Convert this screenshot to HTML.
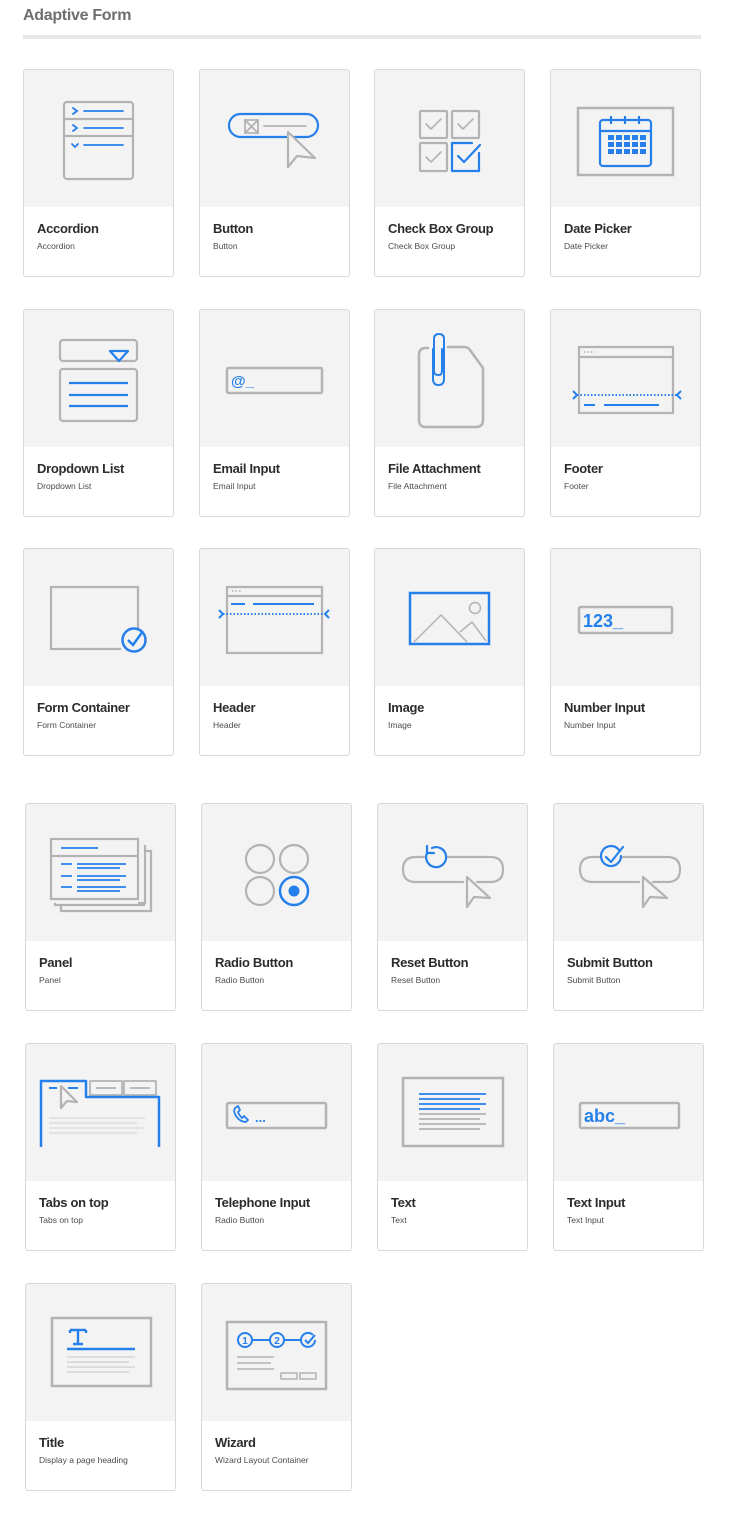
<!DOCTYPE html>
<html><head><meta charset="utf-8"><style>
body{margin:0;background:#fff;width:750px;height:1527px;position:relative;font-family:"Liberation Sans",sans-serif;overflow:hidden}
h1{position:absolute;left:23px;top:7px;margin:0;font-size:16px;font-weight:bold;color:#6e6e6e;letter-spacing:-0.3px}
.hr{position:absolute;left:23px;top:35px;width:678px;height:4px;background:#e8e8e8}
.c{position:absolute;width:149px;height:206px;border:1px solid #d8d8d8;border-radius:3px;background:#fff;overflow:hidden}
.c svg{position:absolute;left:0;top:0;width:149px;height:137px;background:#f3f3f3}
.t{position:absolute;left:13px;top:151px;font-size:13px;font-weight:bold;color:#2c2c2c;letter-spacing:-0.3px;white-space:nowrap}
.s{position:absolute;left:13px;top:171px;font-size:8.5px;color:#4b4b4b;white-space:nowrap}
</style></head><body>
<h1>Adaptive Form</h1><div class="hr"></div>

<!-- Row 1 -->
<div class="c" style="left:23px;top:69px"><svg viewBox="1 1 149 137" fill="none" stroke-width="2.2" stroke-linecap="round">
<rect x="41" y="33" width="69" height="77" rx="3" stroke="#b3b3b3"/><path d="M41 50H110M41 67H110" stroke="#b3b3b3"/>
<path d="M61 42H100M61 59H100M61 76H100M50 39l4 3-4 3M50 56l4 3-4 3M49 75l3 3 3-3" stroke="#2680eb" stroke-width="1.8"/></svg>
<div class="t">Accordion</div><div class="s">Accordion</div></div>

<div class="c" style="left:199px;top:69px"><svg viewBox="1 1 149 137" fill="none" stroke-width="2.2" stroke-linecap="round" stroke-linejoin="round">
<rect x="30" y="45" width="89" height="23" rx="11.5" stroke="#2680eb"/>
<rect x="46" y="51" width="13" height="13" stroke="#b3b3b3" stroke-width="1.8"/><path d="M46 51l13 13M59 51L46 64M65 57H107" stroke="#b3b3b3" stroke-width="1.8"/>
<path d="M89 63V98L98 87L116 89Z" fill="#f3f3f3" stroke="#b3b3b3"/></svg>
<div class="t">Button</div><div class="s">Button</div></div>

<div class="c" style="left:374px;top:69px"><svg viewBox="1 1 149 137" fill="none" stroke-width="2.2" stroke-linecap="round" stroke-linejoin="round">
<rect x="46" y="42" width="27" height="27" rx="1" stroke="#b3b3b3"/><rect x="78" y="42" width="27" height="27" rx="1" stroke="#b3b3b3"/><rect x="46" y="74" width="27" height="28" rx="1" stroke="#b3b3b3"/>
<path d="M52 55l5 5 10-10M84 55l5 5 10-10M52 88l5 5 10-10" stroke="#b3b3b3" stroke-width="1.6"/>
<path d="M98 74H78V102H105V84" stroke="#2680eb"/><path d="M84 87l6 6 16-17" stroke="#2680eb"/></svg>
<div class="t">Check Box Group</div><div class="s">Check Box Group</div></div>

<div class="c" style="left:550px;top:69px"><svg viewBox="1 1 149 137" fill="none" stroke-width="2.2">
<rect x="28" y="39" width="95" height="67" stroke="#b3b3b3" stroke-width="2.5"/>
<rect x="50" y="51" width="51" height="46" rx="3" stroke="#2680eb"/><path d="M50 62H101M61 47V55M75 47V55M89 47V55" stroke="#2680eb"/>
<g fill="#2680eb"><rect x="58" y="66" width="6" height="5"/><rect x="66" y="66" width="6" height="5"/><rect x="74" y="66" width="6" height="5"/><rect x="82" y="66" width="6" height="5"/><rect x="90" y="66" width="6" height="5"/>
<rect x="58" y="73" width="6" height="5"/><rect x="66" y="73" width="6" height="5"/><rect x="74" y="73" width="6" height="5"/><rect x="82" y="73" width="6" height="5"/><rect x="90" y="73" width="6" height="5"/>
<rect x="58" y="80" width="6" height="5"/><rect x="66" y="80" width="6" height="5"/><rect x="74" y="80" width="6" height="5"/><rect x="82" y="80" width="6" height="5"/><rect x="90" y="80" width="6" height="5"/></g></svg>
<div class="t">Date Picker</div><div class="s">Date Picker</div></div>

<!-- Row 2 -->
<div class="c" style="left:23px;top:309px"><svg viewBox="1 1 149 137" fill="none" stroke-width="2.2" stroke-linejoin="round">
<rect x="37" y="31" width="77" height="21" rx="3" stroke="#b3b3b3"/><rect x="37" y="60" width="77" height="52" rx="3" stroke="#b3b3b3"/>
<path d="M87 42H105L96 52Z" fill="#f3f3f3" stroke="#2680eb"/><path d="M46 74H105M46 86H105M46 97H105" stroke="#2680eb"/></svg>
<div class="t">Dropdown List</div><div class="s">Dropdown List</div></div>

<div class="c" style="left:199px;top:309px"><svg viewBox="1 1 149 137" fill="none">
<rect x="28" y="59" width="95" height="25" rx="1.5" stroke="#b3b3b3" stroke-width="2.5"/>
<text x="32" y="77" font-family="Liberation Sans" font-size="15" font-weight="bold" fill="#2680eb">@_</text></svg>
<div class="t">Email Input</div><div class="s">Email Input</div></div>

<div class="c" style="left:374px;top:309px"><svg viewBox="1 1 149 137" fill="none" stroke-width="2.5" stroke-linecap="round">
<path d="M54 39H52Q45 39 45 46V111Q45 118 52 118H102Q109 118 109 111V59L96 41Q94 38 90 38H74" stroke="#b3b3b3"/>
<path d="M59 40V70Q59 76 64.5 76Q70 76 70 70V30Q70 25 65 25Q60 25 60 30V62Q60 66 64.5 66Q68 66 68 62V40" stroke="#2680eb" stroke-width="2"/></svg>
<div class="t">File Attachment</div><div class="s">File Attachment</div></div>

<div class="c" style="left:550px;top:309px"><svg viewBox="1 1 149 137" fill="none" stroke-width="2.2">
<rect x="29" y="38" width="94" height="66" stroke="#b3b3b3"/><path d="M29 48H123" stroke="#b3b3b3"/>
<path d="M34 43h1.5M37.5 43h1.5M41 43h1.5" stroke="#b3b3b3" stroke-width="1.5"/>
<path d="M27 86H127" stroke="#2680eb" stroke-width="2" stroke-dasharray="1.5 2"/>
<path d="M23 82l4 4-4 4M131 82l-4 4 4 4M34 96H45M54 96H109" stroke="#2680eb" stroke-width="2"/></svg>
<div class="t">Footer</div><div class="s">Footer</div></div>

<!-- Row 3 -->
<div class="c" style="left:23px;top:548px"><svg viewBox="1 1 149 137" fill="none" stroke-width="2.2">
<path d="M98 101H28V39H115V80" stroke="#b3b3b3"/>
<circle cx="111" cy="92" r="11.5" stroke="#2680eb" stroke-width="2.5"/><path d="M105 92l5 5 10-14" stroke="#2680eb" stroke-width="2.5"/></svg>
<div class="t">Form Container</div><div class="s">Form Container</div></div>

<div class="c" style="left:199px;top:548px"><svg viewBox="1 1 149 137" fill="none" stroke-width="2.2">
<rect x="28" y="39" width="95" height="66" stroke="#b3b3b3"/><path d="M28 48H123" stroke="#b3b3b3"/>
<path d="M33 43h1.5M36.5 43h1.5M40 43h1.5" stroke="#b3b3b3" stroke-width="1.5"/>
<path d="M32 56H46M54 56H115" stroke="#2680eb" stroke-width="2"/>
<path d="M24 66H126" stroke="#2680eb" stroke-width="2" stroke-dasharray="1.5 2"/>
<path d="M20 62l4 4-4 4M130 62l-4 4 4 4" stroke="#2680eb" stroke-width="2"/></svg>
<div class="t">Header</div><div class="s">Header</div></div>

<div class="c" style="left:374px;top:548px"><svg viewBox="1 1 149 137" fill="none" stroke-width="2">
<rect x="36" y="45" width="79" height="51" stroke="#2680eb" stroke-width="2.5"/>
<circle cx="101" cy="60" r="5.5" stroke="#b3b3b3" stroke-width="1.5"/>
<path d="M40 94L67 67L93 94M86 84L98 74L112 93" stroke="#b3b3b3" stroke-width="1.5"/></svg>
<div class="t">Image</div><div class="s">Image</div></div>

<div class="c" style="left:550px;top:548px"><svg viewBox="1 1 149 137" fill="none">
<rect x="29" y="59" width="93" height="26" rx="1.5" stroke="#b3b3b3" stroke-width="2.5"/>
<text x="33" y="79" font-family="Liberation Sans" font-size="18" font-weight="bold" fill="#2680eb">123_</text></svg>
<div class="t">Number Input</div><div class="s">Number Input</div></div>

<!-- Row 4 -->
<div class="c" style="left:25px;top:803px"><svg viewBox="1 1 149 137" fill="none" stroke-width="2.2">
<path d="M113 100H120V42M30 100V102H120" stroke="#b3b3b3"/><path d="M120 48H126V108H36V102" stroke="#b3b3b3"/>
<rect x="26" y="36" width="87" height="60" fill="#f3f3f3" stroke="#b3b3b3"/><path d="M26 53H113" stroke="#b3b3b3"/>
<path d="M36 45H73M36 61H47M52 61H101M52 65H95M36 73H47M52 73H101M52 77H95M36 84H47M52 84H101M52 88H95" stroke="#2680eb" stroke-width="1.8"/></svg>
<div class="t">Panel</div><div class="s">Panel</div></div>

<div class="c" style="left:201px;top:803px"><svg viewBox="1 1 149 137" fill="none" stroke-width="2.2">
<circle cx="59" cy="56" r="14" stroke="#b3b3b3"/><circle cx="93" cy="56" r="14" stroke="#b3b3b3"/><circle cx="59" cy="88" r="14" stroke="#b3b3b3"/>
<circle cx="93" cy="88" r="14" stroke="#2680eb" stroke-width="2.5"/><circle cx="93" cy="88" r="5.5" fill="#2680eb"/></svg>
<div class="t">Radio Button</div><div class="s">Radio Button</div></div>

<div class="c" style="left:377px;top:803px"><svg viewBox="1 1 149 137" fill="none" stroke-width="2.2" stroke-linejoin="round" stroke-linecap="round">
<path d="M47 54H38.5Q26 54 26 66.5Q26 79 38.5 79H86M100 79H113.5Q126 79 126 66.5Q126 54 113.5 54H69" stroke="#b3b3b3"/>
<path d="M50 50A10 10 0 1 0 55 45" stroke="#2680eb"/><path d="M50 43V50H57" stroke="#2680eb"/>
<path d="M90 74V104L97 94L113 95Z" fill="#f3f3f3" stroke="#b3b3b3"/></svg>
<div class="t">Reset Button</div><div class="s">Reset Button</div></div>

<div class="c" style="left:553px;top:803px"><svg viewBox="1 1 149 137" fill="none" stroke-width="2.2" stroke-linejoin="round" stroke-linecap="round">
<path d="M47 54H39.5Q27 54 27 66.5Q27 79 39.5 79H86M100 79H114.5Q127 79 127 66.5Q127 54 114.5 54H69" stroke="#b3b3b3"/>
<path d="M66 47A10 10 0 1 0 68 53" stroke="#2680eb"/><path d="M53 54l5 5 12-15" stroke="#2680eb"/>
<path d="M90 74V104L97 94L114 95Z" fill="#f3f3f3" stroke="#b3b3b3"/></svg>
<div class="t">Submit Button</div><div class="s">Submit Button</div></div>

<!-- Row 5 -->
<div class="c" style="left:25px;top:1043px"><svg viewBox="1 1 149 137" fill="none" stroke-width="2.2" stroke-linejoin="round">
<rect x="65" y="38" width="32" height="14" stroke="#b3b3b3" stroke-width="1.8"/><rect x="99" y="38" width="32" height="14" stroke="#b3b3b3" stroke-width="1.8"/>
<path d="M71 45H91M105 45H125" stroke="#b3b3b3" stroke-width="1.8"/>
<path d="M16 104V38H61V54H134V104" stroke="#2680eb" stroke-width="2.5"/>
<path d="M24 45H32M43 45H53" stroke="#2680eb" stroke-width="2"/>
<path d="M36 43V65L42 58L52 59Z" fill="#f3f3f3" stroke="#b3b3b3"/>
<path d="M24 75H120M24 80H112M24 85H120M24 90H112" stroke="#dedede" stroke-width="1.5"/></svg>
<div class="t">Tabs on top</div><div class="s">Tabs on top</div></div>

<div class="c" style="left:201px;top:1043px"><svg viewBox="1 1 149 137" fill="none">
<rect x="26" y="60" width="99" height="25" rx="1.5" stroke="#b3b3b3" stroke-width="2.5"/>
<path d="M37 63L34 65Q32 68 35 73Q39 79 45 79L47 77L43 73L41 75Q38 72 37 69L39 67Z" stroke="#2680eb" stroke-width="1.8" stroke-linejoin="round"/>
<text x="54" y="79" font-family="Liberation Sans" font-size="13" font-weight="bold" fill="#2680eb">...</text></svg>
<div class="t">Telephone Input</div><div class="s">Radio Button</div></div>

<div class="c" style="left:377px;top:1043px"><svg viewBox="1 1 149 137" fill="none">
<rect x="26" y="35" width="100" height="68" stroke="#b3b3b3" stroke-width="2.5"/>
<path d="M42 51H109M42 56H103M42 61H109M42 66H103" stroke="#2680eb" stroke-width="1.8"/>
<path d="M42 71H109M42 76H103M42 81H109M42 86H103" stroke="#b3b3b3" stroke-width="1.8"/></svg>
<div class="t">Text</div><div class="s">Text</div></div>

<div class="c" style="left:553px;top:1043px"><svg viewBox="1 1 149 137" fill="none">
<rect x="27" y="60" width="99" height="25" rx="1.5" stroke="#b3b3b3" stroke-width="2.5"/>
<text x="31" y="79" font-family="Liberation Sans" font-size="18" font-weight="bold" fill="#2680eb">abc_</text></svg>
<div class="t">Text Input</div><div class="s">Text Input</div></div>

<!-- Row 6 -->
<div class="c" style="left:25px;top:1283px"><svg viewBox="1 1 149 137" fill="none">
<rect x="27" y="35" width="99" height="68" stroke="#b3b3b3" stroke-width="2.5"/>
<path d="M45 47H61M53 47V61M48 61H58M45 47V50M61 47V50" stroke="#2680eb" stroke-width="2.4"/>
<path d="M42 66H110" stroke="#2680eb" stroke-width="2.4"/>
<path d="M42 74H110M42 79H104M42 84H110M42 89H104" stroke="#d4d4d4" stroke-width="1.5"/></svg>
<div class="t">Title</div><div class="s">Display a page heading</div></div>

<div class="c" style="left:201px;top:1283px"><svg viewBox="1 1 149 137" fill="none" stroke-width="2">
<rect x="26" y="39" width="99" height="67" stroke="#b3b3b3" stroke-width="2.5"/>
<circle cx="44" cy="57" r="7" stroke="#2680eb"/><circle cx="76" cy="57" r="7" stroke="#2680eb"/>
<path d="M51 57H69M83 57H100M112 52A7 7 0 1 0 114 57" stroke="#2680eb"/><path d="M104 57l3 3 7-8" stroke="#2680eb"/>
<text x="44" y="61" font-family="Liberation Sans" font-size="10" font-weight="bold" fill="#2680eb" text-anchor="middle">1</text>
<text x="76" y="61" font-family="Liberation Sans" font-size="10" font-weight="bold" fill="#2680eb" text-anchor="middle">2</text>
<path d="M36 74H73M36 80H70M36 86H73" stroke="#b3b3b3" stroke-width="1.6"/>
<rect x="80" y="90" width="16" height="6" stroke="#b3b3b3" stroke-width="1.5"/><rect x="99" y="90" width="16" height="6" stroke="#b3b3b3" stroke-width="1.5"/></svg>
<div class="t">Wizard</div><div class="s">Wizard Layout Container</div></div>
</body></html>
